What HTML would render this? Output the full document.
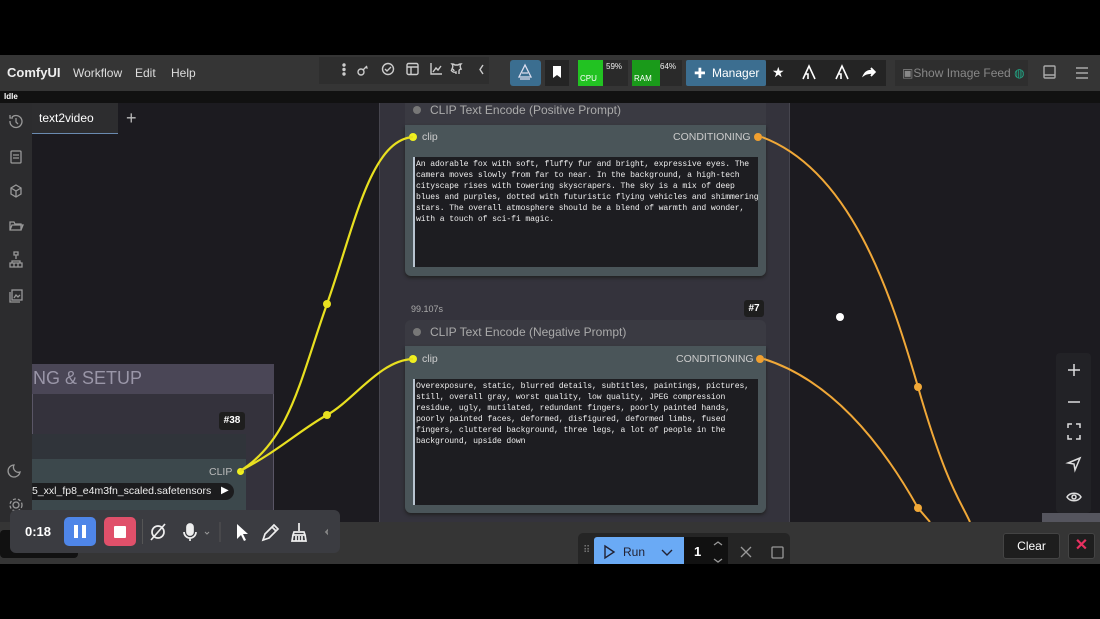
<!DOCTYPE html>
<html><head><meta charset="utf-8"><style>
*{margin:0;padding:0;box-sizing:border-box}
body{width:1100px;height:619px;background:#000;position:relative;overflow:hidden;font-family:"Liberation Sans",sans-serif;color:#ddd}
.a{position:absolute}
.mono{font-family:"Liberation Mono",monospace;font-size:8.1px;line-height:11.1px;color:#eee;white-space:pre;letter-spacing:-0.1px}
</style></head><body>
<!-- menubar -->
<div class="a" style="left:0;top:55px;width:1100px;height:36px;background:#353535"></div>
<div class="a" style="left:7px;top:65px;font-size:13px;font-weight:bold;color:#eee">ComfyUI</div>
<div class="a" style="left:73px;top:66px;font-size:12px;color:#ddd">Workflow</div>
<div class="a" style="left:135px;top:66px;font-size:12px;color:#ddd">Edit</div>
<div class="a" style="left:171px;top:66px;font-size:12px;color:#ddd">Help</div>
<div class="a" style="left:319px;top:57px;width:170px;height:27px;background:#2e2e2e"></div>
<svg class="a" style="left:335px;top:60px" width="160" height="20" fill="none" stroke="#ccc" stroke-width="1.4">
<circle cx="9" cy="5" r="1" fill="#ccc"/><circle cx="9" cy="9.5" r="1" fill="#ccc"/><circle cx="9" cy="14" r="1" fill="#ccc"/>
<circle cx="26" cy="12" r="3"/><path d="M28 10l4-4M31 7l1.5 1.5"/>
<circle cx="53" cy="9" r="5.5"/><path d="M50 9l2 2 4-4"/>
<rect x="72" y="3.5" width="11" height="11" rx="1.5"/><path d="M72 7h11M76 7v7.5"/>
<path d="M96 3v11h11M98 12l3-4 2 2 3-4"/>
<path d="M121 14v-2c-3 1-4-1-5-2M124 14v-3c0-1 1-2 2-2-1-2-1-4 0-5-2 0-3 1-3 1h-3s-1-1-3-1c1 1 1 3 0 5 1 0 2 1 2 2"/>
<path d="M148 5l-3 4.5 3 4.5"/></svg>
<div class="a" style="left:510px;top:60px;width:31px;height:26px;background:#3b6e90;border-radius:3px"></div>
<svg class="a" style="left:516px;top:63px" width="18" height="18" fill="none" stroke="#dde" stroke-width="1.3"><path d="M9 2L3 14h12zM6 10h6M4 16h10"/></svg>
<div class="a" style="left:545px;top:60px;width:24px;height:26px;background:#242424"></div>
<svg class="a" style="left:551px;top:65px" width="12" height="14"><path d="M2 1h8v12l-4-3-4 3z" fill="#fff"/></svg>
<div class="a" style="left:578px;top:60px;width:50px;height:26px;background:#2a2a2a"></div>
<div class="a" style="left:578px;top:60px;width:25px;height:26px;background:#22c222"></div>
<div class="a" style="left:580px;top:74px;font-size:8px;color:#fff">CPU</div>
<div class="a" style="left:606px;top:62px;font-size:8px;color:#eee">59%</div>
<div class="a" style="left:632px;top:60px;width:50px;height:26px;background:#2a2a2a"></div>
<div class="a" style="left:632px;top:60px;width:28px;height:26px;background:#1a9a1a"></div>
<div class="a" style="left:634px;top:74px;font-size:8px;color:#fff">RAM</div>
<div class="a" style="left:660px;top:62px;font-size:8px;color:#eee">64%</div>
<div class="a" style="left:686px;top:60px;width:80px;height:26px;background:#3c6e90;border-radius:2px"></div>
<div class="a" style="left:694px;top:65px;font-size:14px;color:#fff">✚</div>
<div class="a" style="left:712px;top:66px;font-size:12px;color:#fff">Manager</div>
<div class="a" style="left:766px;top:60px;width:120px;height:26px;background:#242424"></div>
<div class="a" style="left:772px;top:64px;font-size:14px;color:#fff">★</div>
<svg class="a" style="left:800px;top:63px" width="80" height="20" fill="none" stroke="#fff" stroke-width="1.6"><path d="M3 16l6-13 6 13M6 11h2v5M36 16l6-13 6 13M39 11h2v5"/><path d="M64 12c2-4 6-5 9-4l-2-3 4 4-4 4 2-3c-3 0-6 0-9 2z" fill="#fff"/></svg>
<div class="a" style="left:895px;top:60px;width:133px;height:26px;background:#2e2e2e"></div>
<div class="a" style="left:902px;top:66px;font-size:12px;color:#888">▣Show Image Feed <span style="color:#2a8">◍</span></div>
<svg class="a" style="left:1040px;top:64px" width="56" height="18" fill="none" stroke="#aaa" stroke-width="1.4"><rect x="4" y="2" width="11" height="12" rx="1"/><path d="M4 11h11M36 4h12M36 9h12M36 14h12"/></svg>
<!-- idle strip -->
<div class="a" style="left:0;top:91px;width:1100px;height:12px;background:#111"></div>
<div class="a" style="left:4px;top:92px;font-size:8px;font-weight:bold;color:#fff">Idle</div>
<!-- canvas -->
<div class="a" style="left:32px;top:103px;width:1068px;height:419px;background:#1c1b20"></div>
<div class="a" style="left:0;top:103px;width:32px;height:419px;background:#2c2c2e"></div>
<svg class="a" style="left:6px;top:112px" width="20" height="400" fill="none" stroke="#999" stroke-width="1.3">
<path d="M4 9a6 6 0 1 0 2-4M4 3v3h3M10 6v4l2 2"/>
<rect x="5" y="39" width="10" height="12" rx="1"/><path d="M7 43h6M7 46h6"/>
<path d="M10 73l5 3v6l-5 3-5-3v-6zM5 76l5 3 5-3M10 79v6"/>
<path d="M4 118v-8h4l1 2h6v6zM4 118l2-5h11l-2 5"/>
<path d="M10 143v4M6 151v-2h8v2M4 151h4v4H4zM8 151h4v4H8zM12 151h4v4h-4zM8 140h4v3H8z"/>
<rect x="6" y="178" width="10" height="10"/><path d="M4 180v10h10M8 186l2-3 2 2 2-2"/>
<path d="M14 360a6 6 0 1 1-6-7 5 5 0 0 0 6 7z"/><circle cx="10" cy="393" r="3"/><circle cx="10" cy="393" r="6" stroke-dasharray="3 2"/></svg>
<div class="a" style="left:32px;top:103px;width:86px;height:31px;background:#2d2d2f;border-bottom:1px solid #6a8ab0"></div>
<div class="a" style="left:39px;top:111px;font-size:12px;color:#fff">text2video</div>
<div class="a" style="left:126px;top:108px;font-size:18px;color:#bbb">+</div>
<!-- group -->
<div class="a" style="left:379px;top:103px;width:411px;height:419px;background:#34333c;border-left:1px solid #46454e;border-right:1px solid #46454e"></div>
<!-- node 1 -->
<div class="a" style="left:405px;top:103px;width:361px;height:22px;background:#3a3a42"></div>
<div class="a" style="left:413px;top:106px;width:8px;height:8px;border-radius:50%;background:#777"></div>
<div class="a" style="left:430px;top:103px;font-size:12px;color:#aaa">CLIP Text Encode (Positive Prompt)</div>
<div class="a" style="left:405px;top:125px;width:361px;height:151px;background:#4a5559;border-radius:0 0 6px 6px;box-shadow:0 2px 3px #222"></div>
<div class="a" style="left:409px;top:133px;width:8px;height:8px;border-radius:50%;background:#f0f020"></div>
<div class="a" style="left:422px;top:131px;font-size:10.5px;color:#ccc">clip</div>
<div class="a" style="left:673px;top:131px;font-size:10.5px;color:#ccc">CONDITIONING</div>
<div class="a" style="left:754px;top:133px;width:8px;height:8px;border-radius:50%;background:#f0a030"></div>
<div class="a" style="left:413px;top:157px;width:345px;height:110px;background:#1d1d21;border-left:2px solid #b8c4d0"></div>
<div class="a mono" style="left:416px;top:159px">An adorable fox with soft, fluffy fur and bright, expressive eyes. The
camera moves slowly from far to near. In the background, a high-tech
cityscape rises with towering skyscrapers. The sky is a mix of deep
blues and purples, dotted with futuristic flying vehicles and shimmering
stars. The overall atmosphere should be a blend of warmth and wonder,
with a touch of sci-fi magic.</div>
<!-- node 2 -->
<div class="a" style="left:411px;top:304px;font-size:9px;color:#aaa">99.107s</div>
<div class="a" style="left:744px;top:300px;width:20px;height:17px;background:#1e1e1e;border-radius:3px;font-size:10px;font-weight:bold;color:#fff;text-align:center;line-height:17px">#7</div>
<div class="a" style="left:405px;top:320px;width:361px;height:26px;background:#3a3a42;border-radius:6px 6px 0 0"></div>
<div class="a" style="left:413px;top:328px;width:8px;height:8px;border-radius:50%;background:#777"></div>
<div class="a" style="left:430px;top:325px;font-size:12px;color:#aaa">CLIP Text Encode (Negative Prompt)</div>
<div class="a" style="left:405px;top:346px;width:361px;height:167px;background:#4a5559;border-radius:0 0 6px 6px;box-shadow:0 2px 3px #222"></div>
<div class="a" style="left:409px;top:355px;width:8px;height:8px;border-radius:50%;background:#f0f020"></div>
<div class="a" style="left:422px;top:353px;font-size:10.5px;color:#ccc">clip</div>
<div class="a" style="left:676px;top:353px;font-size:10.5px;color:#ccc">CONDITIONING</div>
<div class="a" style="left:756px;top:355px;width:8px;height:8px;border-radius:50%;background:#f0a030"></div>
<div class="a" style="left:413px;top:379px;width:345px;height:126px;background:#1d1d21;border-left:2px solid #b8c4d0"></div>
<div class="a mono" style="left:416px;top:381px">Overexposure, static, blurred details, subtitles, paintings, pictures,
still, overall gray, worst quality, low quality, JPEG compression
residue, ugly, mutilated, redundant fingers, poorly painted hands,
poorly painted faces, deformed, disfigured, deformed limbs, fused
fingers, cluttered background, three legs, a lot of people in the
background, upside down</div>
<!-- left group -->
<div class="a" style="left:32px;top:364px;width:242px;height:158px;background:#34323c;border:1px solid #5a5666"></div>
<div class="a" style="left:32px;top:364px;width:242px;height:30px;background:#4a4656"></div>
<div class="a" style="left:33px;top:368px;font-size:18px;color:#9a96a8">NG &amp; SETUP</div>
<div class="a" style="left:219px;top:412px;width:26px;height:18px;background:#1e1e1e;border-radius:3px;font-size:10px;font-weight:bold;color:#fff;text-align:center;line-height:18px">#38</div>
<div class="a" style="left:32px;top:434px;width:214px;height:88px;background:#30343a"></div>
<div class="a" style="left:32px;top:459px;width:214px;height:63px;background:#3c484c"></div>
<div class="a" style="left:209px;top:466px;font-size:10.5px;color:#bbb">CLIP</div>
<div class="a" style="left:237px;top:468px;width:7px;height:7px;border-radius:50%;background:#f0f020"></div>
<div class="a" style="left:32px;top:483px;width:202px;height:17px;background:#1c1c1e;border-radius:0 9px 9px 0"></div>
<div class="a" style="left:32px;top:485px;font-size:10.5px;color:#eee">5_xxl_fp8_e4m3fn_scaled.safetensors</div>
<div class="a" style="left:221px;top:485px;font-size:10px;color:#fff">▶</div>
<!-- wires -->
<svg class="a" style="left:0;top:0" width="1100" height="619" fill="none">
<path d="M240 471C290 440 300 380 327 304S370 140 413 137" stroke="#e8e020" stroke-width="2.2"/>
<path d="M240 471C280 450 300 430 327 415S380 360 413 359" stroke="#e8e020" stroke-width="2.2"/>
<circle cx="327" cy="304" r="4" fill="#e8e020"/><circle cx="327" cy="415" r="4" fill="#e8e020"/>
<path d="M762 137C850 170 890 290 918 387S960 500 970 522" stroke="#f0a838" stroke-width="2"/>
<path d="M764 359C830 380 880 440 918 508L930 522" stroke="#f0a838" stroke-width="2"/>
<circle cx="918" cy="387" r="4" fill="#f0a838"/><circle cx="918" cy="508" r="4" fill="#f0a838"/>
<circle cx="840" cy="317" r="4" fill="#fff"/>
</svg>
<!-- zoom panel -->
<div class="a" style="left:1056px;top:353px;width:35px;height:160px;background:#222226;border-radius:4px"></div>
<svg class="a" style="left:1064px;top:360px" width="20" height="148" fill="none" stroke="#ddd" stroke-width="1.5">
<path d="M10 4v12M4 10h12M4 42h12M4 68v-4h4M12 64h4v4M16 75v4h-4M8 79H4v-4M16 98l-12 5 6 1 1 6z"/>
<path d="M3 137c3-5 11-5 14 0-3 5-11 5-14 0z"/><circle cx="10" cy="137" r="2"/></svg>
<div class="a" style="left:1042px;top:513px;width:58px;height:9px;background:#55555e"></div>
<!-- bottom bar -->
<div class="a" style="left:0;top:522px;width:1100px;height:42px;background:#353535"></div>
<div class="a" style="left:578px;top:533px;width:212px;height:31px;background:#252525;border-radius:5px 5px 0 0"></div>
<div class="a" style="left:583px;top:545px;font-size:10px;color:#777">⠿</div>
<div class="a" style="left:594px;top:537px;width:90px;height:27px;background:#6aaaf5;border-radius:3px 0 0 0"></div>
<svg class="a" style="left:602px;top:544px" width="80" height="16" fill="none" stroke="#223" stroke-width="1.4"><path d="M3 2l9 6-9 6z"/><path d="M60 6l5 5 5-5"/></svg>
<div class="a" style="left:623px;top:545px;font-size:12px;color:#223">Run</div>
<div class="a" style="left:684px;top:537px;width:44px;height:27px;background:#111"></div>
<div class="a" style="left:694px;top:544px;font-size:13px;font-weight:bold;color:#fff">1</div>
<svg class="a" style="left:710px;top:540px" width="80" height="24" fill="none" stroke="#999" stroke-width="1.3"><path d="M4 5l4-3 4 3M4 19l4 3 4-3M31 7l10 10M41 7L31 17"/><rect x="62" y="7" width="11" height="11" rx="1"/></svg>
<div class="a" style="left:1003px;top:533px;width:57px;height:26px;background:#1e1e1e;border:1px solid #444;border-radius:3px;font-size:12px;color:#fff;text-align:center;line-height:24px">Clear</div>
<div class="a" style="left:1068px;top:533px;width:27px;height:26px;background:#1e1e1e;border:1px solid #444;border-radius:3px;font-size:16px;color:#e83060;text-align:center;line-height:24px;font-weight:bold">✕</div>
<!-- recorder toolbar -->
<div class="a" style="left:0;top:530px;width:78px;height:28px;background:#111;border-radius:4px"></div>
<div class="a" style="left:10px;top:510px;width:330px;height:43px;background:#3b3c41;border-radius:6px"></div>
<div class="a" style="left:25px;top:524px;font-size:13px;font-weight:bold;color:#fff">0:18</div>
<div class="a" style="left:64px;top:517px;width:32px;height:29px;background:#4f86e8;border-radius:5px"></div>
<div class="a" style="left:74px;top:525px;width:4px;height:13px;background:#fff"></div><div class="a" style="left:82px;top:525px;width:4px;height:13px;background:#fff"></div>
<div class="a" style="left:104px;top:517px;width:32px;height:29px;background:#e0506a;border-radius:5px"></div>
<div class="a" style="left:114px;top:526px;width:12px;height:12px;background:#fff;border-radius:1px"></div>
<div class="a" style="left:142px;top:519px;width:1px;height:25px;background:#555"></div>
<svg class="a" style="left:148px;top:520px" width="180" height="24" fill="none" stroke="#eee" stroke-width="1.7">
<circle cx="10" cy="12" r="6"/><path d="M3 20L17 4"/>
<rect x="39" y="4" width="6" height="11" rx="3" fill="#eee"/><path d="M36 12a6 6 0 0 0 12 0M42 18v3"/><path d="M57 12l2 2 2-2" stroke="#999" stroke-width="1"/>
<path d="M72 2v20" stroke="#555" stroke-width="1"/>
<path d="M89 4v15l4-4 3 6 2-1-3-6h5z" fill="#fff" stroke="none"/>
<path d="M115 20l2-6 9-9 4 4-9 9zM124 7l4 4"/>
<path d="M151 3v8M146 12h10l1 3h-12zM145 15l-1 6h14l-1-6M148 16v5M151 16v5M154 16v5"/>
<path d="M182 8l-4 4 4 4" stroke="#888"/></svg>
</body></html>
